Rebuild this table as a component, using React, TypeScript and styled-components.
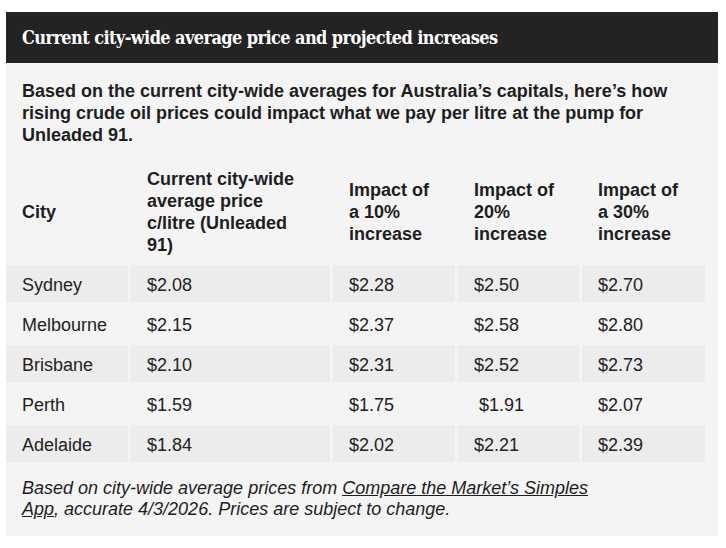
import React from 'react'
import styled, { createGlobalStyle } from 'styled-components'

const GlobalStyle = createGlobalStyle`
  body {
    margin: 0;
    background: #ffffff;
    font-family: "Liberation Sans", Arial, sans-serif;
    color: #222222;
  }
`

type Row = { city: string; current: string; ten: string; twenty: string; thirty: string; nudge?: boolean }

const rows: Row[] = [
  { city: 'Sydney', current: '$2.08', ten: '$2.28', twenty: '$2.50', thirty: '$2.70' },
  { city: 'Melbourne', current: '$2.15', ten: '$2.37', twenty: '$2.58', thirty: '$2.80' },
  { city: 'Brisbane', current: '$2.10', ten: '$2.31', twenty: '$2.52', thirty: '$2.73' },
  { city: 'Perth', current: '$1.59', ten: '$1.75', twenty: '$1.91', thirty: '$2.07', nudge: true },
  { city: 'Adelaide', current: '$1.84', ten: '$2.02', twenty: '$2.21', thirty: '$2.39' },
]

export default function App() {
  return (
    <>
      <GlobalStyle />
      <Box>
        <TitleBar>
          <Title>Current city-wide average price and projected increases</Title>
        </TitleBar>
        <Body>
          <Intro>
            Based on the current city-wide averages for Australia’s capitals, here’s how
            rising crude oil prices could impact what we pay per litre at the pump for
            Unleaded 91.
          </Intro>
          <Table>
            <colgroup>
              <col style={{ width: 122 }} />
              <col style={{ width: 199 }} />
              <col style={{ width: 122 }} />
              <col style={{ width: 121 }} />
              <col style={{ width: 123 }} />
            </colgroup>
            <thead>
              <tr>
                <Th>City</Th>
                <Th>Current city-wide average price c/litre (Unleaded 91)</Th>
                <Th>Impact of a 10% increase</Th>
                <Th>Impact of 20% increase</Th>
                <Th>Impact of a 30% increase</Th>
              </tr>
            </thead>
            <tbody>
              {rows.map((r, i) => (
                <Tr key={r.city} $striped={i % 2 === 0}>
                  <Td>{r.city}</Td>
                  <Td>{r.current}</Td>
                  <Td>{r.ten}</Td>
                  <Td $nudge={r.nudge}>{r.twenty}</Td>
                  <Td>{r.thirty}</Td>
                </Tr>
              ))}
            </tbody>
          </Table>
          <Note>
            Based on city-wide average prices from{' '}
            <NoteLink href="#">Compare the Market’s Simples App</NoteLink>, accurate 4/3/2026.
            Prices are subject to change.
          </Note>
        </Body>
      </Box>
    </>
  )
}

const Box = styled.div`
  margin: 12px 8px 0 6px;
  width: 712px;
  background: #f4f4f4;
`

const TitleBar = styled.div`
  background: #232323;
  height: 51px;
  display: flex;
  align-items: center;
  padding: 0 16px;
`

const Title = styled.h2`
  margin: 0;
  color: #ffffff;
  font-family: "DejaVu Serif Condensed", "DejaVu Serif", serif;
  font-stretch: condensed;
  font-weight: bold;
  font-size: 18px;
  letter-spacing: -0.6px;
`

const Body = styled.div`
  padding: 17px 0 16px;
`

const Intro = styled.p`
  margin: 0 16px 13px;
  font-weight: bold;
  font-size: 18px;
  line-height: 22px;
  color: #1e1e1e;
`

const Table = styled.table`
  border-collapse: separate;
  border-spacing: 3px;
  margin: 0 0 0 -3px;
  table-layout: fixed;
  font-size: 18px;
  line-height: 22px;
`

const Th = styled.th`
  text-align: left;
  font-weight: bold;
  padding: 6px 16px;
  vertical-align: middle;
  color: #1e1e1e;
`

const Tr = styled.tr<{ $striped: boolean }>`
  background: ${(p) => (p.$striped ? '#ececec' : 'transparent')};
`

const Td = styled.td<{ $nudge?: boolean }>`
  padding: 9px 16px 6px ${(p) => (p.$nudge ? '21px' : '16px')};
  color: #222222;
`

const Note = styled.p`
  margin: 13px 16px 0;
  max-width: 590px;
  font-style: italic;
  font-size: 18px;
  line-height: 21px;
  color: #1e1e1e;
`

const NoteLink = styled.a`
  color: #1e1e1e;
  text-decoration: underline;
`
